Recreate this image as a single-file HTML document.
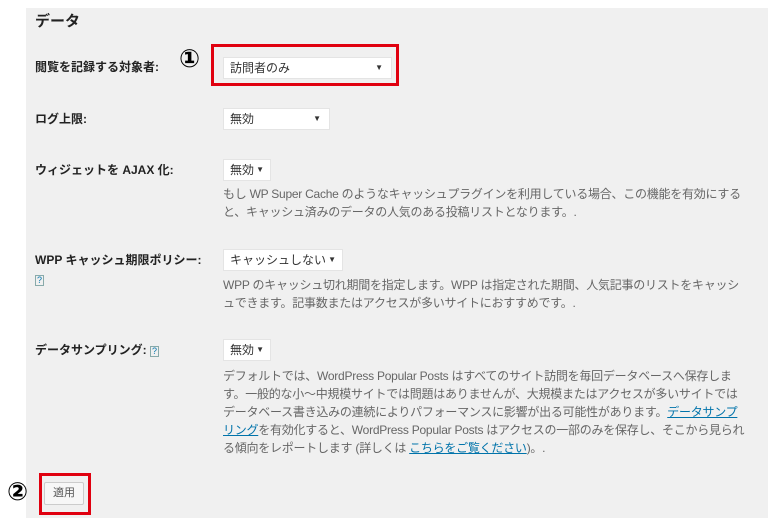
<!DOCTYPE html>
<html><head><meta charset="utf-8"><style>
body{margin:0;width:780px;height:529px;background:#fff;position:relative;overflow:hidden;font-family:"Liberation Sans","Noto Sans CJK JP",sans-serif;}
.panel{position:absolute;left:26px;top:8px;width:742px;height:510px;background:#f0f0f0;}
.a{position:absolute;white-space:nowrap;}
.lbl{font-size:12px;font-weight:bold;color:#222;}
.sel{position:absolute;background:#fff;border:1px solid #e4e4e4;box-sizing:border-box;font-size:12px;color:#333;padding-left:6px;line-height:20px;height:22px;}
.sel .ar{position:absolute;right:8px;top:0;font-size:8px;}
.desc{position:absolute;left:223px;font-size:12px;color:#666;line-height:18px;white-space:nowrap;letter-spacing:-0.25px;}
.desc a{color:#0073aa;text-decoration:underline;}
.red{position:absolute;border:3px solid #e0000f;box-sizing:border-box;}
.q{font-size:9px;color:#0073aa;border:1px solid #8aa;padding:0 1px;font-weight:normal;line-height:9px;display:inline-block;}
.num{position:absolute;font-size:25px;font-weight:bold;color:#000;font-family:"DejaVu Sans",sans-serif;}
</style></head><body>
<div class="panel"></div>
<div class="a" style="left:35px;top:10px;font-size:15px;font-weight:bold;color:#222">データ</div>

<div class="a lbl" style="left:35px;top:58px">閲覧を記録する対象者:</div>
<div class="num" style="left:179px;top:44px">①</div>
<div class="red" style="left:211px;top:44px;width:188px;height:42px"></div>
<div class="sel" style="left:223px;top:57px;width:169px">訪問者のみ<span class="ar">▼</span></div>

<div class="a lbl" style="left:35px;top:110px">ログ上限:</div>
<div class="sel" style="left:223px;top:108px;width:107px">無効<span class="ar">▼</span></div>

<div class="a lbl" style="left:35px;top:161px">ウィジェットを AJAX 化:</div>
<div class="sel" style="left:223px;top:159px;width:48px">無効<span class="ar" style="right:6px">▼</span></div>
<div class="desc" style="top:185px">もし WP Super Cache のようなキャッシュプラグインを利用している場合、この機能を有効にする<br>と、キャッシュ済みのデータの人気のある投稿リストとなります。.</div>

<div class="a lbl" style="left:35px;top:251px">WPP キャッシュ期限ポリシー:</div>
<div class="a" style="left:35px;top:270px"><span class="q">?</span></div>
<div class="sel" style="left:223px;top:249px;width:120px">キャッシュしない<span class="ar" style="right:6px">▼</span></div>
<div class="desc" style="top:276px">WPP のキャッシュ切れ期間を指定します。WPP は指定された期間、人気記事のリストをキャッシ<br>ュできます。記事数またはアクセスが多いサイトにおすすめです。.</div>

<div class="a lbl" style="left:35px;top:341px">データサンプリング: <span class="q">?</span></div>
<div class="sel" style="left:223px;top:339px;width:48px">無効<span class="ar" style="right:6px">▼</span></div>
<div class="desc" style="top:367px">デフォルトでは、WordPress Popular Posts はすべてのサイト訪問を毎回データベースへ保存しま<br>す。一般的な小～中規模サイトでは問題はありませんが、大規模またはアクセスが多いサイトでは<br>データベース書き込みの連続によりパフォーマンスに影響が出る可能性があります。<a>データサンプ<br>リング</a>を有効化すると、WordPress Popular Posts はアクセスの一部のみを保存し、そこから見られ<br>る傾向をレポートします (詳しくは <a>こちらをご覧ください</a>)。.</div>

<div class="num" style="left:7px;top:477px">②</div>
<div class="red" style="left:39px;top:473px;width:52px;height:42px"></div>
<div class="a" style="left:44px;top:482px;width:40px;height:23px;box-sizing:border-box;border:1px solid #ccc;background:#f7f7f7;border-radius:2px;font-size:11px;color:#555;text-align:center;line-height:21px">適用</div>
</body></html>
